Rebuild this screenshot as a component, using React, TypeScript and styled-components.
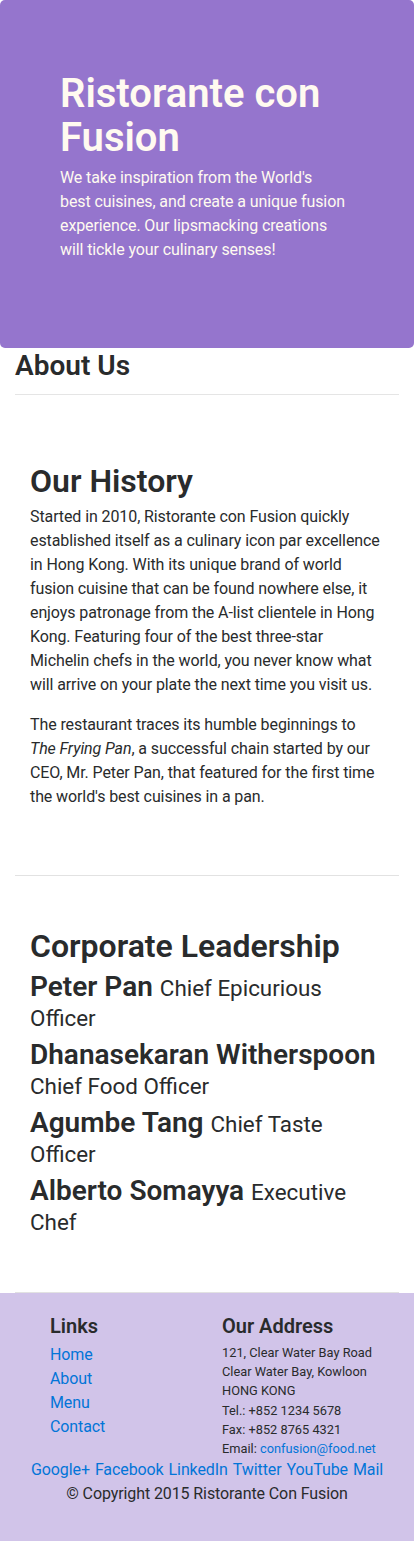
import React from "react";
import styled, { createGlobalStyle } from "styled-components";

const GlobalStyle = createGlobalStyle`
  html, body {
    margin: 0;
    padding: 0;
    background: #ffffff;
  }
  body {
    font-family: Roboto, "Liberation Sans", sans-serif;
    font-size: 16px;
    line-height: 1.5;
    color: #292b2c;
    letter-spacing: -0.1px;
  }
  * { box-sizing: border-box; }
`;

const Page = styled.div`
  display: flex;
  flex-direction: column;
`;

const Jumbotron = styled.header`
  background: #9575cd;
  color: floralwhite;
  border-radius: 5px;
  padding: 70px 60px;
`;

const Title = styled.h1`
  margin: 0 0 8px;
  padding-top: 2px;
  height: 88px;
  font-size: 40px;
  line-height: 44px;
  font-weight: 600;
  letter-spacing: 0;
`;

const Lead = styled.p`
  margin: 0 0 16px;
  font-size: 16px;
  line-height: 24px;
  white-space: nowrap;
`;

const Container = styled.main`
  padding: 0 15px;
  display: flex;
  flex-direction: column;
`;

const PageHeader = styled.h3`
  margin: 0;
  padding-top: 3px;
  height: 31px;
  font-size: 28px;
  line-height: 30px;
  font-weight: 600;
  letter-spacing: 0;
`;

const Rule = styled.hr`
  border: 0;
  border-top: 1px solid rgba(0, 0, 0, 0.1);
  margin: 15px 0 16px;
  height: 0;
`;

const RowContent = styled.section`
  padding: 50px 15px;
  border-bottom: 1px solid #e2e2e2;
`;

const SectionTitle = styled.h2`
  margin: 0 0 8px;
  padding-top: 3px;
  height: 36px;
  font-size: 32px;
  line-height: 35px;
  font-weight: 600;
  letter-spacing: 0;
`;

const Paragraph = styled.p`
  margin: 0 0 16px;
  line-height: 24px;
`;

const Leader = styled.h3`
  margin: 0 0 8px;
  padding-top: 2px;
  height: 60px;
  font-size: 28px;
  line-height: 30px;
  font-weight: 600;
  letter-spacing: 0;
`;

const Role = styled.small`
  font-size: 80%;
  font-weight: 400;
  line-height: 20px;
`;

const Footer = styled.footer`
  background: #d1c4e9;
  padding: 20px 0;
  display: flex;
  flex-direction: column;
  align-items: center;
`;

const FooterColumns = styled.div`
  align-self: stretch;
  display: grid;
  grid-template-columns: 123px 1fr;
  column-gap: 49px;
  padding: 0 20px 0 50px;
`;

const FooterHeading = styled.h5`
  margin: 0 0 8px;
  padding-top: 2px;
  height: 22px;
  font-size: 20px;
  line-height: 22px;
  font-weight: 600;
  letter-spacing: 0;
`;

const LinkList = styled.ul`
  list-style: none;
  margin: 0;
  padding: 0;
  line-height: 24px;
`;

const Link = styled.a`
  color: #0275d8;
  text-decoration: none;
`;

const Address = styled.address`
  font-style: normal;
  font-size: 12.8px;
  line-height: 19.2px;
  margin: 0;
  letter-spacing: 0;
`;

const Social = styled.div`
  line-height: 24px;
  display: flex;
  gap: 5px;
  justify-content: center;
`;

const Copyright = styled.p`
  margin: 0 0 16px;
  line-height: 24px;
  text-align: center;
`;

const leaders: [string, string][] = [
  ["Peter Pan", "Chief Epicurious Officer"],
  ["Dhanasekaran Witherspoon", "Chief Food Officer"],
  ["Agumbe Tang", "Chief Taste Officer"],
  ["Alberto Somayya", "Executive Chef"],
];

const socials = ["Google+", "Facebook", "LinkedIn", "Twitter", "YouTube", "Mail"];

const leadLines = [
  "We take inspiration from the World's",
  "best cuisines, and create a unique fusion",
  "experience. Our lipsmacking creations",
  "will tickle your culinary senses!",
];

export default function App() {
  return (
    <Page>
      <GlobalStyle />
      <Jumbotron>
        <Title>Ristorante con Fusion</Title>
        <Lead>
          {leadLines.map((line, i) => (
            <React.Fragment key={i}>
              {line}
              {i < leadLines.length - 1 && <br />}
            </React.Fragment>
          ))}
        </Lead>
      </Jumbotron>
      <Container>
        <PageHeader>About Us</PageHeader>
        <Rule />
        <RowContent>
          <SectionTitle>Our History</SectionTitle>
          <Paragraph>
            Started in 2010, Ristorante con Fusion quickly established itself as a culinary
            icon par excellence in Hong Kong. With its unique brand of world fusion cuisine
            that can be found nowhere else, it enjoys patronage from the A-list clientele in
            Hong Kong. Featuring four of the best three-star Michelin chefs in the world, you
            never know what will arrive on your plate the next time you visit us.
          </Paragraph>
          <Paragraph>
            The restaurant traces its humble beginnings to <em>The Frying Pan</em>, a successful
            chain started by our CEO, Mr. Peter Pan, that featured for the first time the
            world's best cuisines in a pan.
          </Paragraph>
        </RowContent>
        <RowContent>
          <SectionTitle>Corporate Leadership</SectionTitle>
          {leaders.map(([name, role]) => (
            <Leader key={name}>
              {name} <Role>{role}</Role>
            </Leader>
          ))}
        </RowContent>
      </Container>
      <Footer>
        <FooterColumns>
          <div>
            <FooterHeading>Links</FooterHeading>
            <LinkList>
              <li><Link href="#">Home</Link></li>
              <li><Link href="#">About</Link></li>
              <li><Link href="#">Menu</Link></li>
              <li><Link href="#">Contact</Link></li>
            </LinkList>
          </div>
          <div>
            <FooterHeading>Our Address</FooterHeading>
            <Address>
              121, Clear Water Bay Road<br />
              Clear Water Bay, Kowloon<br />
              HONG KONG<br />
              Tel.: +852 1234 5678<br />
              Fax: +852 8765 4321<br />
              Email: <Link href="#">confusion@food.net</Link>
            </Address>
          </div>
        </FooterColumns>
        <Social>
          {socials.map((s) => (
            <Link key={s} href="#">{s}</Link>
          ))}
        </Social>
        <Copyright>© Copyright 2015 Ristorante Con Fusion</Copyright>
      </Footer>
    </Page>
  );
}
